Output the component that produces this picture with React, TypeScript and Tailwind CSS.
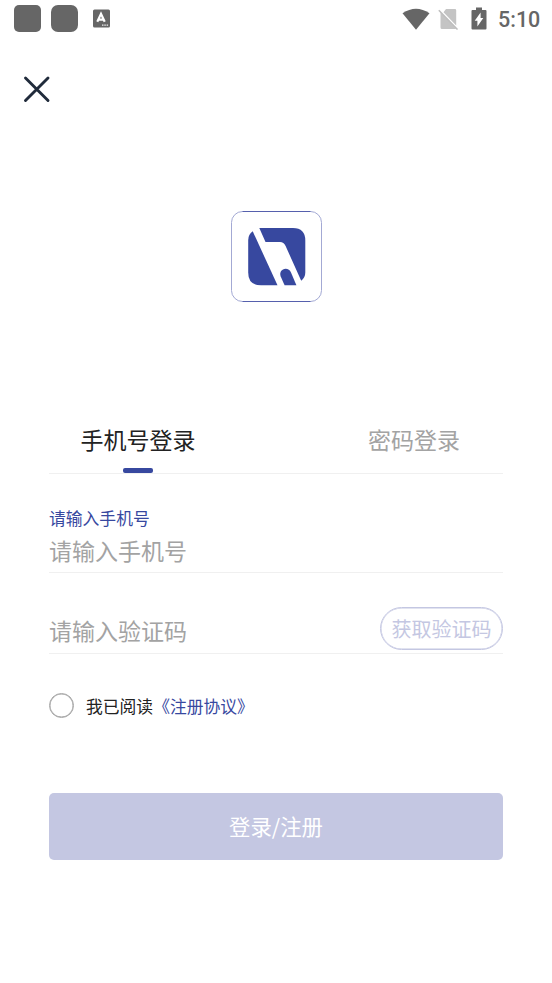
function StatusBar() {
  return (
    <header className="flex h-[37px] items-center justify-between pl-[14px] pr-[13px]">
      <div className="flex items-center">
        <span className="h-[27px] w-[27px] rounded-[5px] bg-[#666]" />
        <span className="ml-[10px] h-[27px] w-[27px] rounded-[7px] bg-[#666]" />
        <svg className="ml-[15px]" width="17" height="19" viewBox="0 0 17 19">
          <rect y="0.5" width="17" height="18" rx="1.5" fill="#666" />
          <path d="M4.3 12.8 8 4.8 11.7 12.8M5.7 10.6H10.3" fill="none" stroke="#fff" strokeWidth="2.2" />
          <path d="M9 16.2h1.5M11.3 16.2h1.5M13.6 16.2h1.5" stroke="#eee" strokeWidth="1.2" />
        </svg>
      </div>
      <div className="flex items-center">
        <svg width="28" height="22" viewBox="0 0 28 22">
          <path d="M0.5 5.2Q14 -3.8 27.5 5.2L14 21.8Z" fill="#666" />
        </svg>
        <svg className="ml-[8px]" width="21" height="22" viewBox="0 0 21 22">
          <path d="M8 1H17Q18.2 1 18.2 2.2V17.6L5.5 4.2ZM2.5 4 18 20.5Q17.6 21 17 21H4Q2.5 21 2.5 19.5Z" fill="#c4c4c4" />
          <path d="M0.8 2.2 19.5 21.5" stroke="#bdbdbd" strokeWidth="1.5" />
        </svg>
        <svg className="ml-[12px]" width="16" height="23" viewBox="0 0 16 23">
          <path d="M5 0.5H11V3H14.5Q15.5 3 15.5 4V21.5Q15.5 22.5 14.5 22.5H1.5Q0.5 22.5 0.5 21.5V4Q0.5 3 1.5 3H5Z" fill="#666" />
          <path d="M9.6 5.5V11H12.3L6.4 19.5V13.8H3.7Z" fill="#fff" />
        </svg>
        <span className="ml-[11px] mt-[3px] w-[41px] whitespace-nowrap font-['Roboto',sans-serif] text-[21.5px] font-medium leading-none text-[#666]">5:10</span>
      </div>
    </header>
  );
}

function Logo() {
  return (
    <svg width="92" height="92" viewBox="0 0 92 92">
      <rect x="0.5" y="0.5" width="90" height="90" rx="11" fill="#fff" stroke="#a3a9d4" strokeWidth="1" />
      <path d="M11.5 0.5H79.5M11.5 90.5H79.5" stroke="#5660ad" strokeWidth="1" />
      <path d="M28.3 17H62Q74.3 17 74.3 29.5V61.5Q74.3 66.5 70.2 69.8L54.6 35Q52.8 31 49 31H34.5Z" fill="#37489f" />
      <path d="M21.7 20.2 46.5 74.3H30Q17.2 74.3 17.2 61.5V29Q17.2 23.5 21.7 20.2Z" fill="#37489f" />
      <path d="M49.7 65.5C48.1 61.5 50.8 57.8 54.6 57.8Q58.3 57.8 60 61.5L65.4 74.3H53.6Z" fill="#37489f" />
    </svg>
  );
}

export default function App() {
  return (
    <main lang="zh-CN" className="flex h-[983px] w-[552px] flex-col overflow-hidden bg-white font-['Noto_Sans_CJK_SC',sans-serif] text-[#222]">
      <StatusBar />
      <button aria-label="关闭" className="ml-[23px] mt-[38px] h-7 w-7">
        <svg width="28" height="28" viewBox="0 0 28 28" fill="none" stroke="#202b3b" strokeWidth="2.9" strokeLinecap="round">
          <path d="M2.5 3 25 25.5M25 3 2.5 25.5" />
        </svg>
      </button>
      <div className="mt-[108px] flex h-[92px] justify-center pl-[2px]">
        <Logo />
      </div>

      <nav className="mt-[111px] flex h-[59px] text-[23px] leading-[50px]">
        <button className="flex flex-1 flex-col items-center">
          <span>手机号登录</span>
          <span className="mt-[4px] h-[5px] w-[30px] rounded-[2px] bg-[#37489f]" />
        </button>
        <button className="flex flex-1 justify-center text-[#a3a3a3]">密码登录</button>
      </nav>

      <section className="mx-[49px] flex flex-col">
        <div className="h-px bg-[#f0f0f0]" />
        <label className="mt-[32px] h-6 text-[16.8px] leading-6 text-[#37489f]">请输入手机号</label>
        <div className="mt-[3px] h-[39px] text-[23px] leading-[34px] text-[#a3a3a3]">请输入手机号</div>
        <div className="h-px bg-[#f0f0f0]" />
        <div className="mt-[34px] flex h-[46px] justify-between">
          <span className="text-[23px] leading-[47px] text-[#a3a3a3]">请输入验证码</span>
          <button className="h-[43px] w-[123px] rounded-full border-[1.5px] border-[#c4c7e2] text-[20px] leading-[40px] text-[#c4c7e2] shadow-[inset_0_0_0_0.5px_#c4c7e2]">获取验证码</button>
        </div>
        <div className="h-px bg-[#f0f0f0]" />
        <div className="mt-[39px] flex h-[25px] items-center text-[16.8px]">
          <span className="h-[25px] w-[25px] rounded-full border border-[#a3a3a3] shadow-[inset_0_0_0_0.5px_#a3a3a3]" />
          <span className="ml-3 mt-[2px] whitespace-nowrap">我已阅读<span className="text-[#37489f]">《注册协议》</span></span>
        </div>
        <button className="mt-[75px] h-[67px] rounded-[5px] bg-[#c4c7e2] text-[21.4px] text-white">登录/注册</button>
      </section>
    </main>
  );
}
